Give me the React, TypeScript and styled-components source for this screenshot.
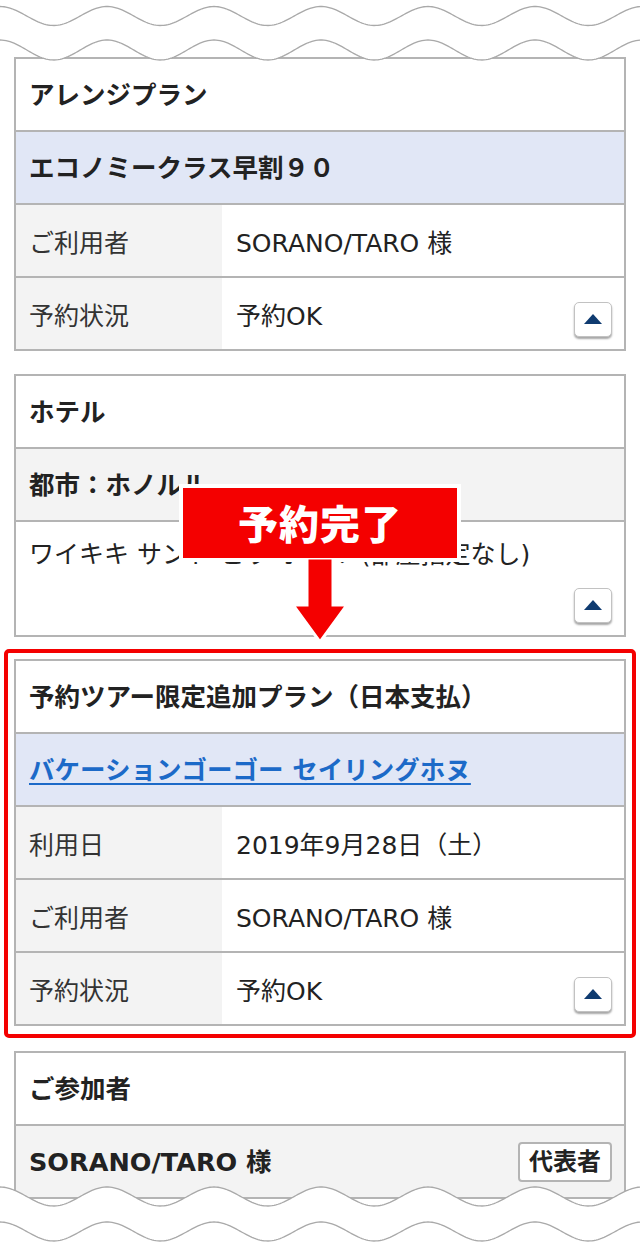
import React from "react";
import styled, { createGlobalStyle } from "styled-components";

const GlobalStyle = createGlobalStyle`
  html, body { margin: 0; padding: 0; background: #fff; }
  body {
    font-family: "DejaVu Sans", "Noto Sans CJK JP", sans-serif;
    color: #222;
    -webkit-font-smoothing: antialiased;
  }
  * { box-sizing: border-box; }
`;

const Page = styled.div`
  position: relative;
  width: 640px;
  height: 1248px;
  overflow: hidden;
  background: #fff;
  padding: 57px 14px 0;
  display: flex;
  flex-direction: column;
`;

const Card = styled.section<{ $gapTop?: number }>`
  border: 2px solid #b4b4b4;
  background: #fff;
  margin-top: ${(p) => p.$gapTop ?? 0}px;
  display: flex;
  flex-direction: column;
`;

const Row = styled.div<{ $bg?: string }>`
  box-sizing: content-box;
  display: flex;
  min-height: 71px;
  background: ${(p) => p.$bg ?? "#fff"};
  & + & {
    border-top: 2px solid #b4b4b4;
  }
`;

const HeadCell = styled.div`
  flex: 1;
  display: flex;
  align-items: center;
  justify-content: space-between;
  padding: 0 12px 0 13px;
  font-size: 25.5px;
  font-weight: 700;
  line-height: 30px;
`;

const Label = styled.div`
  width: 206px;
  flex: none;
  background: #f3f3f3;
  display: flex;
  align-items: center;
  padding: 0 13px;
  font-size: 25px;
  color: #333;
`;

const Value = styled.div`
  flex: 1;
  display: flex;
  align-items: center;
  padding: 0 12px 0 14px;
  font-size: 25px;
  color: #222;
`;

const TallCell = styled.div`
  flex: 1;
  display: flex;
  flex-direction: column;
  padding: 18px 12px 12px 13px;
  font-size: 25px;
  line-height: 30px;
  color: #222;
  white-space: nowrap;
`;

const ToggleButton = styled.button<{ $inline?: boolean }>`
  width: 38px;
  height: 35px;
  flex: none;
  margin-left: auto;
  align-self: flex-end;
  margin-bottom: ${(p) => (p.$inline ? 12 : 0)}px;
  margin-top: ${(p) => (p.$inline ? 0 : 18)}px;
  border: 1px solid #c2c2c2;
  border-radius: 5px;
  background: #fff;
  box-shadow: 0 2px 2px rgba(0, 0, 0, 0.35);
  display: flex;
  align-items: center;
  justify-content: center;
  padding: 0;
  cursor: pointer;
`;

const UpTriangle = styled.span`
  width: 0;
  height: 0;
  border-left: 9px solid transparent;
  border-right: 9px solid transparent;
  border-bottom: 10px solid #0f3b70;
  margin-top: -1px;
`;

const PlanLink = styled.a`
  color: #1c6ac8;
  text-decoration: underline;
  text-underline-offset: 4px;
  text-decoration-thickness: 2px;
`;

const Badge = styled.span`
  font-size: 24px;
  font-weight: 700;
  line-height: 30px;
  padding: 3px 9px;
  border: 2px solid #b4b4b4;
  border-radius: 4px;
  background: #fff;
  color: #222;
`;

const Highlight = styled.div`
  margin: 12px -10px 0;
  border: 4px solid #f40000;
  border-radius: 5px;
  padding: 6px 6px 8px;
`;

const Callout = styled.div`
  position: absolute;
  left: 179px;
  top: 484px;
  width: 282px;
  display: flex;
  flex-direction: column;
  align-items: center;
  z-index: 5;
`;

const CalloutBox = styled.div`
  width: 282px;
  height: 78px;
  background: #f40000;
  border: 4px solid #fff;
  color: #fff;
  font-family: "Noto Sans CJK JP", sans-serif;
  font-size: 40px;
  font-weight: 900;
  letter-spacing: 1px;
  display: flex;
  align-items: center;
  justify-content: center;
  padding-bottom: 2px;
`;

const ArrowSvg = styled.svg`
  display: block;
  margin-top: -4px;
`;

const TearSvg = styled.svg<{ $top: number }>`
  position: absolute;
  left: 0;
  top: ${(p) => p.$top}px;
  display: block;
  z-index: 3;
`;

const P = 107;
const wave = (c: number, A: number, from: number, to: number) => {
  const pts: string[] = [];
  const step = from < to ? 2 : -2;
  for (let x = from; step > 0 ? x <= to : x >= to; x += step) {
    const y = c - A * Math.cos((2 * Math.PI * x) / P);
    pts.push(`${x},${y.toFixed(2)}`);
  }
  return pts;
};

const TopTear = () => {
  const w1 = wave(16, 9.5, 0, 640);
  const w2 = wave(50, 10, 0, 640);
  const fill = `M0,0 L640,0 L${wave(50, 10, 640, 0).join(" L")} Z`;
  return (
    <TearSvg $top={0} width={640} height={64} viewBox="0 0 640 64">
      <path d={fill} fill="#fff" />
      <polyline points={w1.join(" ")} fill="none" stroke="#a9a9a9" strokeWidth={1.3} />
      <polyline points={w2.join(" ")} fill="none" stroke="#a9a9a9" strokeWidth={1.3} />
    </TearSvg>
  );
};

const BottomTear = () => {
  const wA = wave(16.5, 9.5, 0, 640);
  const wB = wave(51.5, 9.5, 0, 640);
  const fill = `M${wA.join(" L")} L640,68 L0,68 Z`;
  return (
    <TearSvg $top={1180} width={640} height={68} viewBox="0 0 640 68">
      <path d={fill} fill="#fff" />
      <polyline points={wA.join(" ")} fill="none" stroke="#a9a9a9" strokeWidth={1.3} />
      <polyline points={wB.join(" ")} fill="none" stroke="#a9a9a9" strokeWidth={1.3} />
    </TearSvg>
  );
};

const Toggle = ({ inline }: { inline?: boolean }) => (
  <ToggleButton $inline={inline} aria-label="閉じる">
    <UpTriangle />
  </ToggleButton>
);

export default function App() {
  return (
    <>
      <GlobalStyle />
      <Page>
        <Card>
          <Row>
            <HeadCell>アレンジプラン</HeadCell>
          </Row>
          <Row $bg="#e1e7f6">
            <HeadCell>エコノミークラス早割９０</HeadCell>
          </Row>
          <Row>
            <Label>ご利用者</Label>
            <Value>SORANO/TARO 様</Value>
          </Row>
          <Row>
            <Label>予約状況</Label>
            <Value>
              予約OK
              <Toggle inline />
            </Value>
          </Row>
        </Card>

        <Card $gapTop={23}>
          <Row>
            <HeadCell>ホテル</HeadCell>
          </Row>
          <Row $bg="#f3f3f3">
            <HeadCell>都市：ホノルル</HeadCell>
          </Row>
          <Row>
            <TallCell>
              <span>ワイキキ サンド ビラ ホテル (部屋指定なし)</span>
              <Toggle />
            </TallCell>
          </Row>
        </Card>

        <Highlight>
          <Card>
            <Row>
              <HeadCell>予約ツアー限定追加プラン（日本支払）</HeadCell>
            </Row>
            <Row $bg="#e1e7f6">
              <HeadCell>
                <PlanLink href="#">バケーションゴーゴー セイリングホヌ</PlanLink>
              </HeadCell>
            </Row>
            <Row>
              <Label>利用日</Label>
              <Value>2019年9月28日（土）</Value>
            </Row>
            <Row>
              <Label>ご利用者</Label>
              <Value>SORANO/TARO 様</Value>
            </Row>
            <Row>
              <Label>予約状況</Label>
              <Value>
                予約OK
                <Toggle inline />
              </Value>
            </Row>
          </Card>
        </Highlight>

        <Card $gapTop={13}>
          <Row>
            <HeadCell>ご参加者</HeadCell>
          </Row>
          <Row $bg="#f3f3f3">
            <HeadCell>
              SORANO/TARO 様<Badge>代表者</Badge>
            </HeadCell>
          </Row>
        </Card>

        <Callout>
          <CalloutBox>予約完了</CalloutBox>
          <ArrowSvg width={64} height={88} viewBox="0 0 64 88">
            <path
              d="M19,0 L45,0 L45,47 L59,47 L32,84 L5,47 L19,47 Z"
              fill="#f40000"
              stroke="#fff"
              strokeWidth={3}
              strokeLinejoin="miter"
            />
          </ArrowSvg>
        </Callout>

        <TopTear />
        <BottomTear />
      </Page>
    </>
  );
}
